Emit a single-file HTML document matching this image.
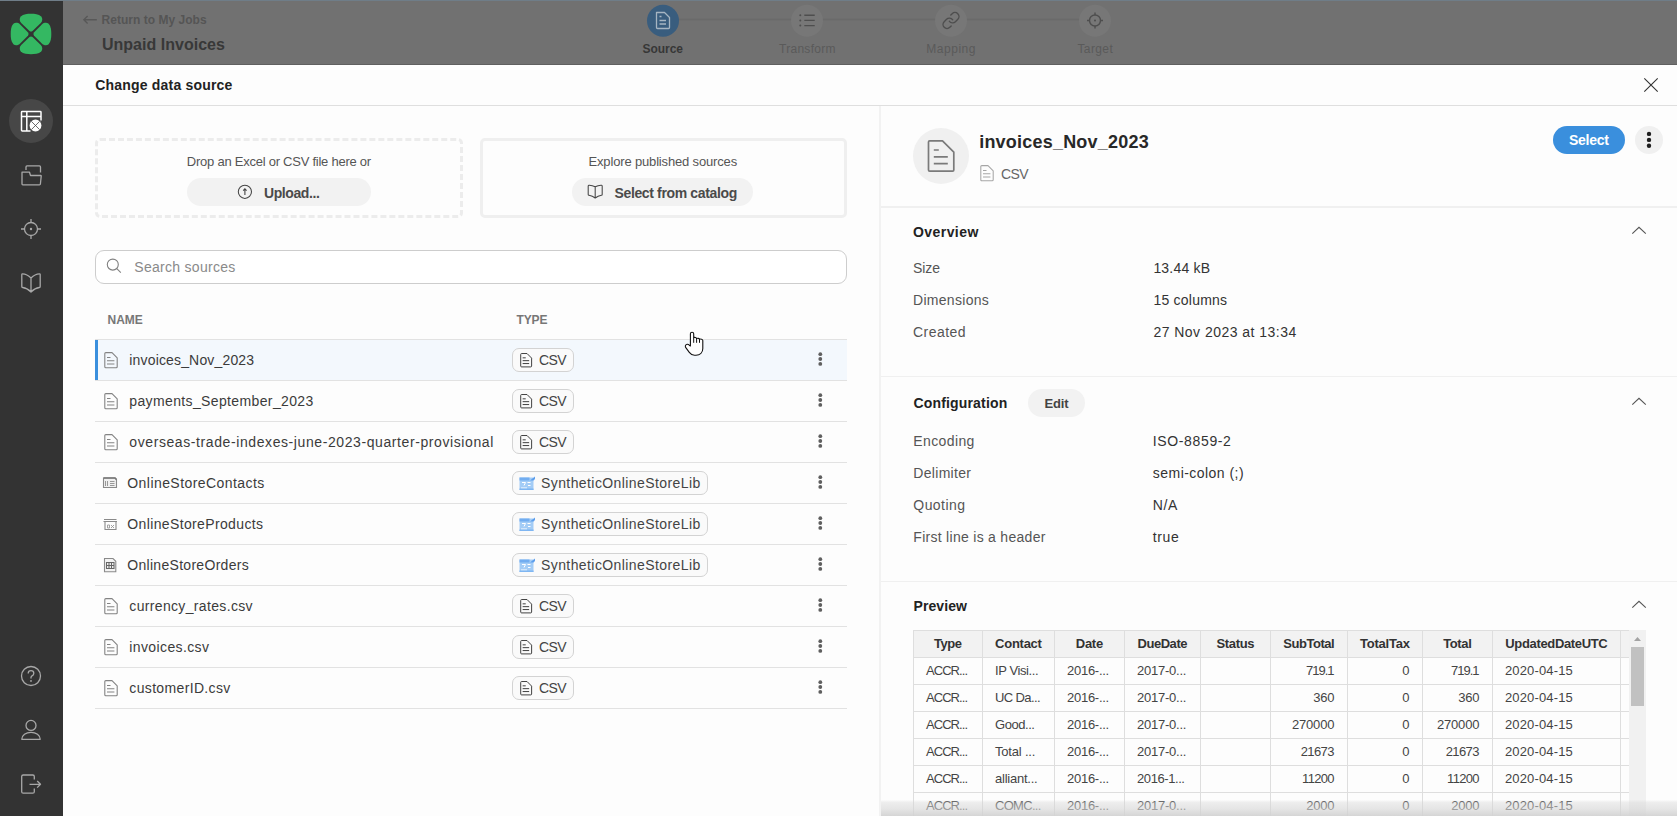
<!DOCTYPE html>
<html><head><meta charset="utf-8">
<style>
*{box-sizing:border-box;margin:0;padding:0}
html,body{width:1677px;height:816px;overflow:hidden;background:#fff}
body{position:relative;font-family:"Liberation Sans",sans-serif;color:#333}
.a{position:absolute;white-space:nowrap}
svg{position:absolute;overflow:visible}
</style></head><body>
<div class="a" style="left:63px;top:0;width:1614px;height:65px;background:#717171"></div>
<div class="a" style="left:63px;top:64px;width:1614px;height:1px;background:#606060"></div>
<div class="a" style="left:63px;top:65px;width:1614px;height:751px;background:#fdfdfd"></div>
<svg style="left:0;top:0" width="1677" height="65">
<line x1="663" y1="19.5" x2="1095" y2="19.5" stroke="#6a6a6a" stroke-width="1.5"/>
<circle cx="663" cy="20.8" r="16" fill="#395d7e"/>
<circle cx="807" cy="20.8" r="16" fill="#777777"/>
<circle cx="951" cy="20.8" r="16" fill="#777777"/>
<circle cx="1095" cy="20.8" r="16" fill="#777777"/>
<g fill="none" stroke="#a6b5c2" stroke-width="1.3" stroke-linejoin="round">
<path d="M656.5,12.5 H664.5 L669.5,17.5 V27.5 Q669.5,28.5 668.5,28.5 H657.5 Q656.5,28.5 656.5,27.5 Z"/>
<path d="M659.5,16.5 H661.5 M659.5,20.5 H666 M659.5,24 H666"/>
</g>
<g fill="none" stroke="#4e4e4e" stroke-width="1.4">
<path d="M804.3,15.3 H814.7 M804.3,20.4 H814.7 M804.3,25.6 H814.7"/>
<g transform="translate(941.4,10.9) scale(0.8)" stroke-width="1.75" stroke-linecap="round" stroke-linejoin="round"><path d="M10 13a5 5 0 0 0 7.54.54l3-3a5 5 0 0 0-7.07-7.07l-1.72 1.71"/><path d="M14 11a5 5 0 0 0-7.54-.54l-3 3a5 5 0 0 0 7.07 7.07l1.71-1.71"/></g>
<circle cx="1095" cy="20.5" r="5.5"/>
<path d="M1095,12.5 V15 M1095,26 V28.5 M1087,20.5 H1089.5 M1100.5,20.5 H1103"/>
</g>
<g fill="#4e4e4e"><circle cx="800.3" cy="15.3" r="1"/><circle cx="800.3" cy="20.4" r="1"/><circle cx="800.3" cy="25.6" r="1"/><circle cx="1095" cy="20.5" r="1"/></g>
<path d="M96.8,19.7 H83.8 M87.6,15.9 L83.8,19.7 L87.6,23.5" fill="none" stroke="#585858" stroke-width="1.35"/>
</svg>
<div class="a" style="left:63px;top:105px;width:1614px;height:1px;background:#dfdfdf;border-radius:0px;"></div>
<svg style="left:1643;top:77" width="16" height="16"><path d="M1.3,1.3 L14.7,14.7 M14.7,1.3 L1.3,14.7" stroke="#333" stroke-width="1.1"/></svg>
<div class="a" style="left:95px;top:138px;width:368px;height:80px;background:transparent;border-radius:5px;border:3px dashed #ececec;"></div>
<div class="a" style="left:187.3px;top:178.3px;width:183.7px;height:27.6px;background:#f2f2f2;border-radius:14px;"></div>
<svg style="left:232;top:180" width="26" height="26"><circle cx="12.9" cy="11.8" r="6.6" fill="none" stroke="#444" stroke-width="1.05"/><path d="M12.9,15 V8.9 M11.2,10.6 L12.9,8.9 L14.6,10.6" fill="none" stroke="#444" stroke-width="1.1"/></svg>
<div class="a" style="left:479.5px;top:138.3px;width:367.5px;height:79.5px;background:transparent;border-radius:5px;border:3px solid #efefef;"></div>
<div class="a" style="left:572.2px;top:178.4px;width:181.3px;height:27.5px;background:#f2f2f2;border-radius:14px;"></div>
<svg style="left:582;top:180" width="26" height="26"><path d="M13.2,6.8 Q10,5 6.8,5.2 Q6.2,5.3 6.2,6 V14.5 Q6.2,15.2 7,15.3 Q10.5,15.8 13.2,18 Q16,15.8 19.4,15.3 Q20.2,15.2 20.2,14.5 V6 Q20.2,5.3 19.6,5.2 Q16.4,5 13.2,6.8 V17.8" fill="none" stroke="#444" stroke-width="1.05" stroke-linejoin="round"/></svg>
<div class="a" style="left:95.4px;top:250.3px;width:751.6px;height:34px;background:#fff;border-radius:9px;border:1px solid #cdcdcd;"></div>
<svg style="left:100;top:254" width="26" height="26"><circle cx="12.8" cy="10.6" r="5.5" fill="none" stroke="#808080" stroke-width="1.1"/><path d="M16.8,14.6 L20.8,18.6" stroke="#808080" stroke-width="1.1"/></svg>
<div class="a" style="left:95px;top:339px;width:752px;height:1px;background:#e2e2e2;border-radius:0px;"></div>
<div class="a" style="left:95px;top:340px;width:752px;height:40px;background:#f3f8fd;border-radius:0px;"></div>
<div class="a" style="left:95px;top:340px;width:3px;height:40px;background:#3a8fdd;border-radius:0px;"></div>
<div class="a" style="left:95px;top:380px;width:752px;height:1px;background:#e2e2e2;border-radius:0px;"></div>
<svg style="left:103.6px;top:351.5px" width="16.00" height="18.00" viewBox="0 0 16 18"><path d="M0.8,1.6 Q0.8,0.6 1.8,0.6 H8 L13.2,5.8 V14.8 Q13.2,15.8 12.2,15.8 H1.8 Q0.8,15.8 0.8,14.8 Z" fill="none" stroke="#838383" stroke-width="1.1" stroke-linejoin="round"/><path d="M3,5.5 H6.5 M3,8.7 H10.4 M3,12 H10.4" stroke="#838383" stroke-width="1.1"/></svg>
<div class="a" style="left:512px;top:348px;width:61.5px;height:24px;background:#fafafa;border-radius:7px;border:1px solid #d3d3d3;"></div>
<svg style="left:520.1px;top:352.6px" width="14.08" height="15.84" viewBox="0 0 16 18"><path d="M0.8,1.6 Q0.8,0.6 1.8,0.6 H8 L13.2,5.8 V14.8 Q13.2,15.8 12.2,15.8 H1.8 Q0.8,15.8 0.8,14.8 Z" fill="none" stroke="#3a3a3a" stroke-width="1.1" stroke-linejoin="round"/><path d="M3,5.5 H6.5 M3,8.7 H10.4 M3,12 H10.4" stroke="#3a3a3a" stroke-width="1.1"/></svg>
<svg style="left:816px;top:350px" width="8" height="18"><circle cx="4.3" cy="4.2" r="1.9" fill="#5f5f5f"/><circle cx="4.3" cy="9" r="1.9" fill="#5f5f5f"/><circle cx="4.3" cy="13.9" r="1.9" fill="#5f5f5f"/></svg>
<div class="a" style="left:95px;top:421px;width:752px;height:1px;background:#e2e2e2;border-radius:0px;"></div>
<svg style="left:103.6px;top:392.5px" width="16.00" height="18.00" viewBox="0 0 16 18"><path d="M0.8,1.6 Q0.8,0.6 1.8,0.6 H8 L13.2,5.8 V14.8 Q13.2,15.8 12.2,15.8 H1.8 Q0.8,15.8 0.8,14.8 Z" fill="none" stroke="#838383" stroke-width="1.1" stroke-linejoin="round"/><path d="M3,5.5 H6.5 M3,8.7 H10.4 M3,12 H10.4" stroke="#838383" stroke-width="1.1"/></svg>
<div class="a" style="left:512px;top:389px;width:61.5px;height:24px;background:#fafafa;border-radius:7px;border:1px solid #d3d3d3;"></div>
<svg style="left:520.1px;top:393.6px" width="14.08" height="15.84" viewBox="0 0 16 18"><path d="M0.8,1.6 Q0.8,0.6 1.8,0.6 H8 L13.2,5.8 V14.8 Q13.2,15.8 12.2,15.8 H1.8 Q0.8,15.8 0.8,14.8 Z" fill="none" stroke="#3a3a3a" stroke-width="1.1" stroke-linejoin="round"/><path d="M3,5.5 H6.5 M3,8.7 H10.4 M3,12 H10.4" stroke="#3a3a3a" stroke-width="1.1"/></svg>
<svg style="left:816px;top:391px" width="8" height="18"><circle cx="4.3" cy="4.2" r="1.9" fill="#5f5f5f"/><circle cx="4.3" cy="9" r="1.9" fill="#5f5f5f"/><circle cx="4.3" cy="13.9" r="1.9" fill="#5f5f5f"/></svg>
<div class="a" style="left:95px;top:462px;width:752px;height:1px;background:#e2e2e2;border-radius:0px;"></div>
<svg style="left:103.6px;top:433.5px" width="16.00" height="18.00" viewBox="0 0 16 18"><path d="M0.8,1.6 Q0.8,0.6 1.8,0.6 H8 L13.2,5.8 V14.8 Q13.2,15.8 12.2,15.8 H1.8 Q0.8,15.8 0.8,14.8 Z" fill="none" stroke="#838383" stroke-width="1.1" stroke-linejoin="round"/><path d="M3,5.5 H6.5 M3,8.7 H10.4 M3,12 H10.4" stroke="#838383" stroke-width="1.1"/></svg>
<div class="a" style="left:512px;top:430px;width:61.5px;height:24px;background:#fafafa;border-radius:7px;border:1px solid #d3d3d3;"></div>
<svg style="left:520.1px;top:434.6px" width="14.08" height="15.84" viewBox="0 0 16 18"><path d="M0.8,1.6 Q0.8,0.6 1.8,0.6 H8 L13.2,5.8 V14.8 Q13.2,15.8 12.2,15.8 H1.8 Q0.8,15.8 0.8,14.8 Z" fill="none" stroke="#3a3a3a" stroke-width="1.1" stroke-linejoin="round"/><path d="M3,5.5 H6.5 M3,8.7 H10.4 M3,12 H10.4" stroke="#3a3a3a" stroke-width="1.1"/></svg>
<svg style="left:816px;top:432px" width="8" height="18"><circle cx="4.3" cy="4.2" r="1.9" fill="#5f5f5f"/><circle cx="4.3" cy="9" r="1.9" fill="#5f5f5f"/><circle cx="4.3" cy="13.9" r="1.9" fill="#5f5f5f"/></svg>
<div class="a" style="left:95px;top:503px;width:752px;height:1px;background:#e2e2e2;border-radius:0px;"></div>
<div class="a" style="left:512.3px;top:471px;width:195.3px;height:23.5px;background:#fafafa;border-radius:7px;border:1px solid #d3d3d3;"></div>
<svg style="left:518.5px;top:475.5px" width="17" height="15"><rect x="0.5" y="1.5" width="14" height="12.5" fill="#a3ccf6"/><rect x="0.5" y="1.5" width="10" height="3" fill="#72adf0"/><path d="M11,4.5 L16,0.5 V3 L14.5,4.5 Z" fill="#5d9eec"/><path d="M3,6.5 H6.5 L5,9.5 M8.5,6.5 H11.5 M9,9.5 H11.5 M2,12 H8" fill="none" stroke="#fff" stroke-width="1"/><rect x="0.5" y="12.5" width="14" height="1.5" fill="#7fb6f2"/></svg>
<svg style="left:102.5px;top:381.5px" width="16" height="12"></svg>
<svg style="left:816px;top:473px" width="8" height="18"><circle cx="4.3" cy="4.2" r="1.9" fill="#5f5f5f"/><circle cx="4.3" cy="9" r="1.9" fill="#5f5f5f"/><circle cx="4.3" cy="13.9" r="1.9" fill="#5f5f5f"/></svg>
<div class="a" style="left:95px;top:544px;width:752px;height:1px;background:#e2e2e2;border-radius:0px;"></div>
<div class="a" style="left:512.3px;top:512px;width:195.3px;height:23.5px;background:#fafafa;border-radius:7px;border:1px solid #d3d3d3;"></div>
<svg style="left:518.5px;top:516.5px" width="17" height="15"><rect x="0.5" y="1.5" width="14" height="12.5" fill="#a3ccf6"/><rect x="0.5" y="1.5" width="10" height="3" fill="#72adf0"/><path d="M11,4.5 L16,0.5 V3 L14.5,4.5 Z" fill="#5d9eec"/><path d="M3,6.5 H6.5 L5,9.5 M8.5,6.5 H11.5 M9,9.5 H11.5 M2,12 H8" fill="none" stroke="#fff" stroke-width="1"/><rect x="0.5" y="12.5" width="14" height="1.5" fill="#7fb6f2"/></svg>
<svg style="left:816px;top:514px" width="8" height="18"><circle cx="4.3" cy="4.2" r="1.9" fill="#5f5f5f"/><circle cx="4.3" cy="9" r="1.9" fill="#5f5f5f"/><circle cx="4.3" cy="13.9" r="1.9" fill="#5f5f5f"/></svg>
<div class="a" style="left:95px;top:585px;width:752px;height:1px;background:#e2e2e2;border-radius:0px;"></div>
<div class="a" style="left:512.3px;top:553px;width:195.3px;height:23.5px;background:#fafafa;border-radius:7px;border:1px solid #d3d3d3;"></div>
<svg style="left:518.5px;top:557.5px" width="17" height="15"><rect x="0.5" y="1.5" width="14" height="12.5" fill="#a3ccf6"/><rect x="0.5" y="1.5" width="10" height="3" fill="#72adf0"/><path d="M11,4.5 L16,0.5 V3 L14.5,4.5 Z" fill="#5d9eec"/><path d="M3,6.5 H6.5 L5,9.5 M8.5,6.5 H11.5 M9,9.5 H11.5 M2,12 H8" fill="none" stroke="#fff" stroke-width="1"/><rect x="0.5" y="12.5" width="14" height="1.5" fill="#7fb6f2"/></svg>
<svg style="left:816px;top:555px" width="8" height="18"><circle cx="4.3" cy="4.2" r="1.9" fill="#5f5f5f"/><circle cx="4.3" cy="9" r="1.9" fill="#5f5f5f"/><circle cx="4.3" cy="13.9" r="1.9" fill="#5f5f5f"/></svg>
<div class="a" style="left:95px;top:626px;width:752px;height:1px;background:#e2e2e2;border-radius:0px;"></div>
<svg style="left:103.6px;top:597.5px" width="16.00" height="18.00" viewBox="0 0 16 18"><path d="M0.8,1.6 Q0.8,0.6 1.8,0.6 H8 L13.2,5.8 V14.8 Q13.2,15.8 12.2,15.8 H1.8 Q0.8,15.8 0.8,14.8 Z" fill="none" stroke="#838383" stroke-width="1.1" stroke-linejoin="round"/><path d="M3,5.5 H6.5 M3,8.7 H10.4 M3,12 H10.4" stroke="#838383" stroke-width="1.1"/></svg>
<div class="a" style="left:512px;top:594px;width:61.5px;height:24px;background:#fafafa;border-radius:7px;border:1px solid #d3d3d3;"></div>
<svg style="left:520.1px;top:598.6px" width="14.08" height="15.84" viewBox="0 0 16 18"><path d="M0.8,1.6 Q0.8,0.6 1.8,0.6 H8 L13.2,5.8 V14.8 Q13.2,15.8 12.2,15.8 H1.8 Q0.8,15.8 0.8,14.8 Z" fill="none" stroke="#3a3a3a" stroke-width="1.1" stroke-linejoin="round"/><path d="M3,5.5 H6.5 M3,8.7 H10.4 M3,12 H10.4" stroke="#3a3a3a" stroke-width="1.1"/></svg>
<svg style="left:816px;top:596px" width="8" height="18"><circle cx="4.3" cy="4.2" r="1.9" fill="#5f5f5f"/><circle cx="4.3" cy="9" r="1.9" fill="#5f5f5f"/><circle cx="4.3" cy="13.9" r="1.9" fill="#5f5f5f"/></svg>
<div class="a" style="left:95px;top:667px;width:752px;height:1px;background:#e2e2e2;border-radius:0px;"></div>
<svg style="left:103.6px;top:638.5px" width="16.00" height="18.00" viewBox="0 0 16 18"><path d="M0.8,1.6 Q0.8,0.6 1.8,0.6 H8 L13.2,5.8 V14.8 Q13.2,15.8 12.2,15.8 H1.8 Q0.8,15.8 0.8,14.8 Z" fill="none" stroke="#838383" stroke-width="1.1" stroke-linejoin="round"/><path d="M3,5.5 H6.5 M3,8.7 H10.4 M3,12 H10.4" stroke="#838383" stroke-width="1.1"/></svg>
<div class="a" style="left:512px;top:635px;width:61.5px;height:24px;background:#fafafa;border-radius:7px;border:1px solid #d3d3d3;"></div>
<svg style="left:520.1px;top:639.6px" width="14.08" height="15.84" viewBox="0 0 16 18"><path d="M0.8,1.6 Q0.8,0.6 1.8,0.6 H8 L13.2,5.8 V14.8 Q13.2,15.8 12.2,15.8 H1.8 Q0.8,15.8 0.8,14.8 Z" fill="none" stroke="#3a3a3a" stroke-width="1.1" stroke-linejoin="round"/><path d="M3,5.5 H6.5 M3,8.7 H10.4 M3,12 H10.4" stroke="#3a3a3a" stroke-width="1.1"/></svg>
<svg style="left:816px;top:637px" width="8" height="18"><circle cx="4.3" cy="4.2" r="1.9" fill="#5f5f5f"/><circle cx="4.3" cy="9" r="1.9" fill="#5f5f5f"/><circle cx="4.3" cy="13.9" r="1.9" fill="#5f5f5f"/></svg>
<div class="a" style="left:95px;top:708px;width:752px;height:1px;background:#e2e2e2;border-radius:0px;"></div>
<svg style="left:103.6px;top:679.5px" width="16.00" height="18.00" viewBox="0 0 16 18"><path d="M0.8,1.6 Q0.8,0.6 1.8,0.6 H8 L13.2,5.8 V14.8 Q13.2,15.8 12.2,15.8 H1.8 Q0.8,15.8 0.8,14.8 Z" fill="none" stroke="#838383" stroke-width="1.1" stroke-linejoin="round"/><path d="M3,5.5 H6.5 M3,8.7 H10.4 M3,12 H10.4" stroke="#838383" stroke-width="1.1"/></svg>
<div class="a" style="left:512px;top:676px;width:61.5px;height:24px;background:#fafafa;border-radius:7px;border:1px solid #d3d3d3;"></div>
<svg style="left:520.1px;top:680.6px" width="14.08" height="15.84" viewBox="0 0 16 18"><path d="M0.8,1.6 Q0.8,0.6 1.8,0.6 H8 L13.2,5.8 V14.8 Q13.2,15.8 12.2,15.8 H1.8 Q0.8,15.8 0.8,14.8 Z" fill="none" stroke="#3a3a3a" stroke-width="1.1" stroke-linejoin="round"/><path d="M3,5.5 H6.5 M3,8.7 H10.4 M3,12 H10.4" stroke="#3a3a3a" stroke-width="1.1"/></svg>
<svg style="left:816px;top:678px" width="8" height="18"><circle cx="4.3" cy="4.2" r="1.9" fill="#5f5f5f"/><circle cx="4.3" cy="9" r="1.9" fill="#5f5f5f"/><circle cx="4.3" cy="13.9" r="1.9" fill="#5f5f5f"/></svg>
<svg style="left:100px;top:470px" width="22" height="110">
<g fill="none" stroke="#8a8a8a" stroke-width="1.1">
<path d="M3.5,17.5 V8 H15 L16.5,9.5 V17.5 Z" fill="#f0f0f0"/><path d="M3.5,8 H15 L16.5,9.5" stroke="#777" stroke-width="1.6"/>
<path d="M5.5,11 V16 M7.5,11 V16 M10,11.5 H14.5 M10,13.5 H14.5 M10,15.5 H14.5" stroke="#999" stroke-width="1"/>
<path d="M4,49.5 H16.5 M3.5,51.5 H17 M5,52 V59.5 H16 V52" />
<path d="M7.5,55 H9.5 V58 H7.5 Z M11,55 L14,58 M14,55 L11,58" stroke="#999" stroke-width="0.9"/>
<path d="M4.5,88.5 H13 L15.8,91.3 V101.8 H4.5 Z" fill="#f3f3f3"/>
<path d="M6.5,92.5 H14 V98.5 H6.5 Z M6.5,95.5 H14 M9,92.5 V98.5 M11.5,92.5 V98.5" stroke="#666" stroke-width="1.1"/>
</g></svg>
<div class="a" style="left:879px;top:106px;width:2px;height:710px;background:#f2f2f2;border-radius:0px;"></div>
<svg style="left:680px;top:328px" width="30" height="30"><path d="M10.4,18 L10.4,5.8 C10.4,3.8 13.7,3.8 13.7,5.8 L13.7,9.6 C14.5,9.2 16.4,9.3 16.6,10.6 C17.4,10 19.4,10.3 19.5,11.4 C20.4,10.8 22.8,11 22.8,12.6 L22.8,20.5 C22.8,24.5 20,27.2 16,27.2 L14.5,27.2 C12,27.2 10.5,26 9.3,24.4 L5.8,19.6 C5,18.5 5.3,17 6.5,16.5 C7.6,16 8.6,16.5 9.3,17.2 Z" fill="#fff" stroke="#111" stroke-width="1.1" stroke-linejoin="round"/><path d="M13.7,9.6 V14.8 M16.6,10.6 V14.8 M19.5,11.4 V14.8" stroke="#111" stroke-width="1"/></svg>
<svg style="left:913px;top:128px" width="56" height="56"><circle cx="28" cy="28" r="28" fill="#f0f0f0"/><path d="M15.5,14 Q15.5,12.8 16.7,12.8 H29.5 L40.8,24.1 V42 Q40.8,43.2 39.6,43.2 H16.7 Q15.5,43.2 15.5,42 Z" fill="none" stroke="#7a7a7a" stroke-width="1.7" stroke-linejoin="round"/><path d="M20.8,22 H25.8 M20.8,28.8 H34.8 M20.8,35.6 H34.8" stroke="#7a7a7a" stroke-width="1.7"/></svg>
<svg style="left:980.3px;top:165.3px" width="16.00" height="18.00" viewBox="0 0 16 18"><path d="M0.8,1.6 Q0.8,0.6 1.8,0.6 H8 L13.2,5.8 V14.8 Q13.2,15.8 12.2,15.8 H1.8 Q0.8,15.8 0.8,14.8 Z" fill="none" stroke="#a6a6a6" stroke-width="1.05" stroke-linejoin="round"/><path d="M3,5.5 H6.5 M3,8.7 H10.4 M3,12 H10.4" stroke="#a6a6a6" stroke-width="1.05"/></svg>
<div class="a" style="left:1553px;top:126px;width:72px;height:28px;background:#3a8fdd;border-radius:14px;"></div>
<svg style="left:1635px;top:126px" width="28" height="28"><circle cx="14" cy="14" r="14" fill="#f0f0f0"/><circle cx="14" cy="7.9" r="2.2" fill="#1e1e1e"/><circle cx="14" cy="13.9" r="2.2" fill="#1e1e1e"/><circle cx="14" cy="19.8" r="2.2" fill="#1e1e1e"/></svg>
<div class="a" style="left:881px;top:206px;width:796px;height:2px;background:#f0f0f0;border-radius:0px;"></div>
<svg style="left:1630px;top:225px" width="18" height="12"><path d="M2.3,8.7 L9,2.3 L15.8,8.7" fill="none" stroke="#555" stroke-width="1.1"/></svg>
<div class="a" style="left:881px;top:376px;width:796px;height:1px;background:#f0f0f0;border-radius:0px;"></div>
<div class="a" style="left:1028px;top:389px;width:57px;height:28px;background:#f2f2f2;border-radius:14px;"></div>
<svg style="left:1630px;top:396px" width="18" height="12"><path d="M2.3,8.7 L9,2.3 L15.8,8.7" fill="none" stroke="#555" stroke-width="1.1"/></svg>
<div class="a" style="left:881px;top:581px;width:796px;height:1px;background:#f0f0f0;border-radius:0px;"></div>
<svg style="left:1630px;top:599px" width="18" height="12"><path d="M2.3,8.7 L9,2.3 L15.8,8.7" fill="none" stroke="#555" stroke-width="1.1"/></svg>
<div class="a" style="left:913px;top:630px;width:716px;height:27px;background:#f2f2f2;border-radius:0px;"></div>
<div class="a" style="left:913px;top:630px;width:716px;height:1px;background:#dedede;border-radius:0px;"></div>
<div class="a" style="left:913px;top:657px;width:716px;height:1px;background:#dedede;border-radius:0px;"></div>
<div class="a" style="left:913px;top:684px;width:716px;height:1px;background:#dedede;border-radius:0px;"></div>
<div class="a" style="left:913px;top:711px;width:716px;height:1px;background:#dedede;border-radius:0px;"></div>
<div class="a" style="left:913px;top:738px;width:716px;height:1px;background:#dedede;border-radius:0px;"></div>
<div class="a" style="left:913px;top:765px;width:716px;height:1px;background:#dedede;border-radius:0px;"></div>
<div class="a" style="left:913px;top:792px;width:716px;height:1px;background:#dedede;border-radius:0px;"></div>
<div class="a" style="left:913px;top:819px;width:716px;height:1px;background:#dedede;border-radius:0px;"></div>
<div class="a" style="left:913px;top:630px;width:1px;height:186px;background:#dedede;border-radius:0px;"></div>
<div class="a" style="left:982px;top:630px;width:1px;height:186px;background:#dedede;border-radius:0px;"></div>
<div class="a" style="left:1054px;top:630px;width:1px;height:186px;background:#dedede;border-radius:0px;"></div>
<div class="a" style="left:1124px;top:630px;width:1px;height:186px;background:#dedede;border-radius:0px;"></div>
<div class="a" style="left:1200px;top:630px;width:1px;height:186px;background:#dedede;border-radius:0px;"></div>
<div class="a" style="left:1270px;top:630px;width:1px;height:186px;background:#dedede;border-radius:0px;"></div>
<div class="a" style="left:1347px;top:630px;width:1px;height:186px;background:#dedede;border-radius:0px;"></div>
<div class="a" style="left:1422px;top:630px;width:1px;height:186px;background:#dedede;border-radius:0px;"></div>
<div class="a" style="left:1492px;top:630px;width:1px;height:186px;background:#dedede;border-radius:0px;"></div>
<div class="a" style="left:1620px;top:630px;width:1px;height:186px;background:#dedede;border-radius:0px;"></div>
<div class="a" style="left:1629px;top:630px;width:17px;height:186px;background:#f1f1f1;border-radius:0px;"></div>
<div class="a" style="left:1631px;top:647px;width:13px;height:59px;background:#c1c1c1;border-radius:0px;"></div>
<svg style="left:1629px;top:630px" width="17" height="17"><path d="M5,11 L8.5,7 L12,11 Z" fill="#a3a3a3"/></svg>
<div class="a t" id="t0" style="left:101.60px;top:13.84px;font-size:12px;line-height:12px;font-weight:700;color:#555;letter-spacing:0.021px">Return to My Jobs</div>
<div class="a t" id="t1" style="left:101.90px;top:36.76px;font-size:16px;line-height:16px;font-weight:700;color:#383838;letter-spacing:0.021px">Unpaid Invoices</div>
<div class="a t" id="t2" style="left:662.73px;transform:translateX(-50%);top:43.24px;font-size:12px;line-height:12px;font-weight:700;color:#373737;letter-spacing:-0.037px">Source</div>
<div class="a t" id="t3" style="left:807.39px;transform:translateX(-50%);top:42.84px;font-size:12px;line-height:12px;font-weight:400;color:#5a5a5a;letter-spacing:0.283px">Transform</div>
<div class="a t" id="t4" style="left:951.16px;transform:translateX(-50%);top:42.84px;font-size:12px;line-height:12px;font-weight:400;color:#5a5a5a;letter-spacing:0.528px">Mapping</div>
<div class="a t" id="t5" style="left:1095.30px;transform:translateX(-50%);top:42.84px;font-size:12px;line-height:12px;font-weight:400;color:#5a5a5a;letter-spacing:0.408px">Target</div>
<div class="a t" id="t6" style="left:95.30px;top:78.35px;font-size:14px;line-height:14px;font-weight:700;color:#222;letter-spacing:0.187px">Change data source</div>
<div class="a t" id="t7" style="left:278.88px;transform:translateX(-50%);top:155.40px;font-size:13px;line-height:13px;font-weight:400;color:#555;letter-spacing:-0.247px">Drop an Excel or CSV file here or</div>
<div class="a t" id="t8" style="left:264.00px;top:185.55px;font-size:14px;line-height:14px;font-weight:700;color:#4a4a4a;letter-spacing:-0.416px">Upload...</div>
<div class="a t" id="t9" style="left:662.77px;transform:translateX(-50%);top:155.30px;font-size:13px;line-height:13px;font-weight:400;color:#555;letter-spacing:-0.158px">Explore published sources</div>
<div class="a t" id="t10" style="left:614.50px;top:185.55px;font-size:14px;line-height:14px;font-weight:700;color:#4a4a4a;letter-spacing:-0.359px">Select from catalog</div>
<div class="a t" id="t11" style="left:134.30px;top:260.35px;font-size:14px;line-height:14px;font-weight:400;color:#8a8a8a;letter-spacing:0.286px">Search sources</div>
<div class="a t" id="t12" style="left:107.50px;top:314.14px;font-size:12px;line-height:12px;font-weight:700;color:#777;letter-spacing:0.000px">NAME</div>
<div class="a t" id="t13" style="left:516.50px;top:314.14px;font-size:12px;line-height:12px;font-weight:700;color:#777;letter-spacing:-0.115px">TYPE</div>
<div class="a t" id="t14" style="left:129.30px;top:353.15px;font-size:14px;line-height:14px;font-weight:400;color:#3b3b3b;letter-spacing:0.162px">invoices_Nov_2023</div>
<div class="a t" id="t15" style="left:539.00px;top:353.15px;font-size:14px;line-height:14px;font-weight:400;color:#444;letter-spacing:-0.598px">CSV</div>
<div class="a t" id="t16" style="left:129.30px;top:394.15px;font-size:14px;line-height:14px;font-weight:400;color:#3b3b3b;letter-spacing:0.368px">payments_September_2023</div>
<div class="a t" id="t17" style="left:539.00px;top:394.15px;font-size:14px;line-height:14px;font-weight:400;color:#444;letter-spacing:-0.598px">CSV</div>
<div class="a t" id="t18" style="left:129.30px;top:435.15px;font-size:14px;line-height:14px;font-weight:400;color:#3b3b3b;letter-spacing:0.591px">overseas-trade-indexes-june-2023-quarter-provisional</div>
<div class="a t" id="t19" style="left:539.00px;top:435.15px;font-size:14px;line-height:14px;font-weight:400;color:#444;letter-spacing:-0.598px">CSV</div>
<div class="a t" id="t20" style="left:127.30px;top:476.15px;font-size:14px;line-height:14px;font-weight:400;color:#3b3b3b;letter-spacing:0.434px">OnlineStoreContacts</div>
<div class="a t" id="t21" style="left:541.00px;top:476.15px;font-size:14px;line-height:14px;font-weight:400;color:#444;letter-spacing:0.413px">SyntheticOnlineStoreLib</div>
<div class="a t" id="t22" style="left:127.30px;top:517.15px;font-size:14px;line-height:14px;font-weight:400;color:#3b3b3b;letter-spacing:0.362px">OnlineStoreProducts</div>
<div class="a t" id="t23" style="left:541.00px;top:517.15px;font-size:14px;line-height:14px;font-weight:400;color:#444;letter-spacing:0.413px">SyntheticOnlineStoreLib</div>
<div class="a t" id="t24" style="left:127.30px;top:558.15px;font-size:14px;line-height:14px;font-weight:400;color:#3b3b3b;letter-spacing:0.293px">OnlineStoreOrders</div>
<div class="a t" id="t25" style="left:541.00px;top:558.15px;font-size:14px;line-height:14px;font-weight:400;color:#444;letter-spacing:0.413px">SyntheticOnlineStoreLib</div>
<div class="a t" id="t26" style="left:129.30px;top:599.15px;font-size:14px;line-height:14px;font-weight:400;color:#3b3b3b;letter-spacing:0.342px">currency_rates.csv</div>
<div class="a t" id="t27" style="left:539.00px;top:599.15px;font-size:14px;line-height:14px;font-weight:400;color:#444;letter-spacing:-0.598px">CSV</div>
<div class="a t" id="t28" style="left:129.30px;top:640.15px;font-size:14px;line-height:14px;font-weight:400;color:#3b3b3b;letter-spacing:0.385px">invoices.csv</div>
<div class="a t" id="t29" style="left:539.00px;top:640.15px;font-size:14px;line-height:14px;font-weight:400;color:#444;letter-spacing:-0.598px">CSV</div>
<div class="a t" id="t30" style="left:129.30px;top:681.15px;font-size:14px;line-height:14px;font-weight:400;color:#3b3b3b;letter-spacing:0.349px">customerID.csv</div>
<div class="a t" id="t31" style="left:539.00px;top:681.15px;font-size:14px;line-height:14px;font-weight:400;color:#444;letter-spacing:-0.598px">CSV</div>
<div class="a t" id="t32" style="left:979.20px;top:132.56px;font-size:18px;line-height:18px;font-weight:700;color:#282828;letter-spacing:0.212px">invoices_Nov_2023</div>
<div class="a t" id="t33" style="left:1001.00px;top:167.05px;font-size:14px;line-height:14px;font-weight:400;color:#666;letter-spacing:-0.598px">CSV</div>
<div class="a t" id="t34" style="left:1588.88px;transform:translateX(-50%);top:133.15px;font-size:14px;line-height:14px;font-weight:700;color:#fff;letter-spacing:-0.250px">Select</div>
<div class="a t" id="t35" style="left:913.00px;top:225.15px;font-size:14px;line-height:14px;font-weight:700;color:#222;letter-spacing:0.433px">Overview</div>
<div class="a t" id="t36" style="left:913.00px;top:261.15px;font-size:14px;line-height:14px;font-weight:400;color:#555;letter-spacing:-0.078px">Size</div>
<div class="a t" id="t37" style="left:1153.40px;top:261.15px;font-size:14px;line-height:14px;font-weight:400;color:#333;letter-spacing:0.191px">13.44 kB</div>
<div class="a t" id="t38" style="left:913.00px;top:293.15px;font-size:14px;line-height:14px;font-weight:400;color:#555;letter-spacing:0.295px">Dimensions</div>
<div class="a t" id="t39" style="left:1153.40px;top:293.15px;font-size:14px;line-height:14px;font-weight:400;color:#333;letter-spacing:0.234px">15 columns</div>
<div class="a t" id="t40" style="left:913.00px;top:325.15px;font-size:14px;line-height:14px;font-weight:400;color:#555;letter-spacing:0.448px">Created</div>
<div class="a t" id="t41" style="left:1153.40px;top:325.15px;font-size:14px;line-height:14px;font-weight:400;color:#333;letter-spacing:0.469px">27 Nov 2023 at 13:34</div>
<div class="a t" id="t42" style="left:913.50px;top:395.95px;font-size:14px;line-height:14px;font-weight:700;color:#222;letter-spacing:0.161px">Configuration</div>
<div class="a t" id="t43" style="left:1056.41px;transform:translateX(-50%);top:396.80px;font-size:13px;line-height:13px;font-weight:700;color:#444;letter-spacing:-0.188px">Edit</div>
<div class="a t" id="t44" style="left:913.30px;top:433.95px;font-size:14px;line-height:14px;font-weight:400;color:#555;letter-spacing:0.387px">Encoding</div>
<div class="a t" id="t45" style="left:1152.80px;top:433.95px;font-size:14px;line-height:14px;font-weight:400;color:#333;letter-spacing:0.636px">ISO-8859-2</div>
<div class="a t" id="t46" style="left:913.30px;top:465.95px;font-size:14px;line-height:14px;font-weight:400;color:#555;letter-spacing:0.308px">Delimiter</div>
<div class="a t" id="t47" style="left:1152.80px;top:465.95px;font-size:14px;line-height:14px;font-weight:400;color:#333;letter-spacing:0.462px">semi-colon (;)</div>
<div class="a t" id="t48" style="left:913.30px;top:497.95px;font-size:14px;line-height:14px;font-weight:400;color:#555;letter-spacing:0.442px">Quoting</div>
<div class="a t" id="t49" style="left:1152.80px;top:497.95px;font-size:14px;line-height:14px;font-weight:400;color:#333;letter-spacing:0.628px">N/A</div>
<div class="a t" id="t50" style="left:913.30px;top:529.95px;font-size:14px;line-height:14px;font-weight:400;color:#555;letter-spacing:0.287px">First line is a header</div>
<div class="a t" id="t51" style="left:1152.80px;top:529.95px;font-size:14px;line-height:14px;font-weight:400;color:#333;letter-spacing:0.625px">true</div>
<div class="a t" id="t52" style="left:913.50px;top:599.15px;font-size:14px;line-height:14px;font-weight:700;color:#222;letter-spacing:0.094px">Preview</div>
<div class="a t" id="t53" style="left:947.77px;transform:translateX(-50%);top:637.00px;font-size:13px;line-height:13px;font-weight:700;color:#333;letter-spacing:-0.464px">Type</div>
<div class="a t" id="t54" style="left:1018.37px;transform:translateX(-50%);top:637.00px;font-size:13px;line-height:13px;font-weight:700;color:#333;letter-spacing:-0.265px">Contact</div>
<div class="a t" id="t55" style="left:1089.35px;transform:translateX(-50%);top:637.00px;font-size:13px;line-height:13px;font-weight:700;color:#333;letter-spacing:-0.296px">Date</div>
<div class="a t" id="t56" style="left:1162.27px;transform:translateX(-50%);top:637.00px;font-size:13px;line-height:13px;font-weight:700;color:#333;letter-spacing:-0.458px">DueDate</div>
<div class="a t" id="t57" style="left:1235.33px;transform:translateX(-50%);top:637.00px;font-size:13px;line-height:13px;font-weight:700;color:#333;letter-spacing:-0.347px">Status</div>
<div class="a t" id="t58" style="left:1308.78px;transform:translateX(-50%);top:637.00px;font-size:13px;line-height:13px;font-weight:700;color:#333;letter-spacing:-0.449px">SubTotal</div>
<div class="a t" id="t59" style="left:1384.88px;transform:translateX(-50%);top:637.00px;font-size:13px;line-height:13px;font-weight:700;color:#333;letter-spacing:-0.247px">TotalTax</div>
<div class="a t" id="t60" style="left:1457.30px;transform:translateX(-50%);top:637.00px;font-size:13px;line-height:13px;font-weight:700;color:#333;letter-spacing:-0.398px">Total</div>
<div class="a t" id="t61" style="left:1556.33px;transform:translateX(-50%);top:637.00px;font-size:13px;line-height:13px;font-weight:700;color:#333;letter-spacing:-0.347px">UpdatedDateUTC</div>
<div class="a t" id="t62" style="left:926.00px;top:664.20px;font-size:13px;line-height:13px;font-weight:400;color:#444;letter-spacing:-0.945px">ACCR...</div>
<div class="a t" id="t63" style="left:995.00px;top:664.20px;font-size:13px;line-height:13px;font-weight:400;color:#444;letter-spacing:-0.413px">IP Visi...</div>
<div class="a t" id="t64" style="left:1067.00px;top:664.20px;font-size:13px;line-height:13px;font-weight:400;color:#444;letter-spacing:-0.271px">2016-...</div>
<div class="a t" id="t65" style="left:1137.00px;top:664.20px;font-size:13px;line-height:13px;font-weight:400;color:#444;letter-spacing:-0.241px">2017-0...</div>
<div class="a t" id="t66" style="left:1333.49px;transform:translateX(-100%);top:664.20px;font-size:13px;line-height:13px;font-weight:400;color:#444;letter-spacing:-1.012px">719.1</div>
<div class="a t" id="t67" style="left:1409.50px;transform:translateX(-100%);top:664.20px;font-size:13px;line-height:13px;font-weight:400;color:#444;letter-spacing:0.000px">0</div>
<div class="a t" id="t68" style="left:1478.49px;transform:translateX(-100%);top:664.20px;font-size:13px;line-height:13px;font-weight:400;color:#444;letter-spacing:-1.012px">719.1</div>
<div class="a t" id="t69" style="left:1505.00px;top:664.20px;font-size:13px;line-height:13px;font-weight:400;color:#444;letter-spacing:0.144px">2020-04-15</div>
<div class="a t" id="t70" style="left:926.00px;top:691.20px;font-size:13px;line-height:13px;font-weight:400;color:#444;letter-spacing:-0.945px">ACCR...</div>
<div class="a t" id="t71" style="left:995.00px;top:691.20px;font-size:13px;line-height:13px;font-weight:400;color:#444;letter-spacing:-0.621px">UC Da...</div>
<div class="a t" id="t72" style="left:1067.00px;top:691.20px;font-size:13px;line-height:13px;font-weight:400;color:#444;letter-spacing:-0.271px">2016-...</div>
<div class="a t" id="t73" style="left:1137.00px;top:691.20px;font-size:13px;line-height:13px;font-weight:400;color:#444;letter-spacing:-0.241px">2017-0...</div>
<div class="a t" id="t74" style="left:1334.30px;transform:translateX(-100%);top:691.20px;font-size:13px;line-height:13px;font-weight:400;color:#444;letter-spacing:-0.202px">360</div>
<div class="a t" id="t75" style="left:1409.50px;transform:translateX(-100%);top:691.20px;font-size:13px;line-height:13px;font-weight:400;color:#444;letter-spacing:0.000px">0</div>
<div class="a t" id="t76" style="left:1479.30px;transform:translateX(-100%);top:691.20px;font-size:13px;line-height:13px;font-weight:400;color:#444;letter-spacing:-0.202px">360</div>
<div class="a t" id="t77" style="left:1505.00px;top:691.20px;font-size:13px;line-height:13px;font-weight:400;color:#444;letter-spacing:0.144px">2020-04-15</div>
<div class="a t" id="t78" style="left:926.00px;top:718.20px;font-size:13px;line-height:13px;font-weight:400;color:#444;letter-spacing:-0.945px">ACCR...</div>
<div class="a t" id="t79" style="left:995.00px;top:718.20px;font-size:13px;line-height:13px;font-weight:400;color:#444;letter-spacing:-0.457px">Good...</div>
<div class="a t" id="t80" style="left:1067.00px;top:718.20px;font-size:13px;line-height:13px;font-weight:400;color:#444;letter-spacing:-0.271px">2016-...</div>
<div class="a t" id="t81" style="left:1137.00px;top:718.20px;font-size:13px;line-height:13px;font-weight:400;color:#444;letter-spacing:-0.241px">2017-0...</div>
<div class="a t" id="t82" style="left:1334.34px;transform:translateX(-100%);top:718.20px;font-size:13px;line-height:13px;font-weight:400;color:#444;letter-spacing:-0.158px">270000</div>
<div class="a t" id="t83" style="left:1409.50px;transform:translateX(-100%);top:718.20px;font-size:13px;line-height:13px;font-weight:400;color:#444;letter-spacing:0.000px">0</div>
<div class="a t" id="t84" style="left:1479.34px;transform:translateX(-100%);top:718.20px;font-size:13px;line-height:13px;font-weight:400;color:#444;letter-spacing:-0.158px">270000</div>
<div class="a t" id="t85" style="left:1505.00px;top:718.20px;font-size:13px;line-height:13px;font-weight:400;color:#444;letter-spacing:0.144px">2020-04-15</div>
<div class="a t" id="t86" style="left:926.00px;top:745.20px;font-size:13px;line-height:13px;font-weight:400;color:#444;letter-spacing:-0.945px">ACCR...</div>
<div class="a t" id="t87" style="left:995.00px;top:745.20px;font-size:13px;line-height:13px;font-weight:400;color:#444;letter-spacing:-0.190px">Total ...</div>
<div class="a t" id="t88" style="left:1067.00px;top:745.20px;font-size:13px;line-height:13px;font-weight:400;color:#444;letter-spacing:-0.271px">2016-...</div>
<div class="a t" id="t89" style="left:1137.00px;top:745.20px;font-size:13px;line-height:13px;font-weight:400;color:#444;letter-spacing:-0.241px">2017-0...</div>
<div class="a t" id="t90" style="left:1333.91px;transform:translateX(-100%);top:745.20px;font-size:13px;line-height:13px;font-weight:400;color:#444;letter-spacing:-0.589px">21673</div>
<div class="a t" id="t91" style="left:1409.50px;transform:translateX(-100%);top:745.20px;font-size:13px;line-height:13px;font-weight:400;color:#444;letter-spacing:0.000px">0</div>
<div class="a t" id="t92" style="left:1478.91px;transform:translateX(-100%);top:745.20px;font-size:13px;line-height:13px;font-weight:400;color:#444;letter-spacing:-0.589px">21673</div>
<div class="a t" id="t93" style="left:1505.00px;top:745.20px;font-size:13px;line-height:13px;font-weight:400;color:#444;letter-spacing:0.144px">2020-04-15</div>
<div class="a t" id="t94" style="left:926.00px;top:772.20px;font-size:13px;line-height:13px;font-weight:400;color:#444;letter-spacing:-0.945px">ACCR...</div>
<div class="a t" id="t95" style="left:995.00px;top:772.20px;font-size:13px;line-height:13px;font-weight:400;color:#444;letter-spacing:-0.235px">alliant...</div>
<div class="a t" id="t96" style="left:1067.00px;top:772.20px;font-size:13px;line-height:13px;font-weight:400;color:#444;letter-spacing:-0.271px">2016-...</div>
<div class="a t" id="t97" style="left:1137.00px;top:772.20px;font-size:13px;line-height:13px;font-weight:400;color:#444;letter-spacing:-0.416px">2016-1...</div>
<div class="a t" id="t98" style="left:1333.80px;transform:translateX(-100%);top:772.20px;font-size:13px;line-height:13px;font-weight:400;color:#444;letter-spacing:-0.697px">11200</div>
<div class="a t" id="t99" style="left:1409.50px;transform:translateX(-100%);top:772.20px;font-size:13px;line-height:13px;font-weight:400;color:#444;letter-spacing:0.000px">0</div>
<div class="a t" id="t100" style="left:1478.80px;transform:translateX(-100%);top:772.20px;font-size:13px;line-height:13px;font-weight:400;color:#444;letter-spacing:-0.697px">11200</div>
<div class="a t" id="t101" style="left:1505.00px;top:772.20px;font-size:13px;line-height:13px;font-weight:400;color:#444;letter-spacing:0.144px">2020-04-15</div>
<div class="a t" id="t102" style="left:926.00px;top:799.20px;font-size:13px;line-height:13px;font-weight:400;color:#444;letter-spacing:-0.945px">ACCR...</div>
<div class="a t" id="t103" style="left:995.00px;top:799.20px;font-size:13px;line-height:13px;font-weight:400;color:#444;letter-spacing:-0.710px">COMC...</div>
<div class="a t" id="t104" style="left:1067.00px;top:799.20px;font-size:13px;line-height:13px;font-weight:400;color:#444;letter-spacing:-0.271px">2016-...</div>
<div class="a t" id="t105" style="left:1137.00px;top:799.20px;font-size:13px;line-height:13px;font-weight:400;color:#444;letter-spacing:-0.241px">2017-0...</div>
<div class="a t" id="t106" style="left:1334.26px;transform:translateX(-100%);top:799.20px;font-size:13px;line-height:13px;font-weight:400;color:#444;letter-spacing:-0.241px">2000</div>
<div class="a t" id="t107" style="left:1409.50px;transform:translateX(-100%);top:799.20px;font-size:13px;line-height:13px;font-weight:400;color:#444;letter-spacing:0.000px">0</div>
<div class="a t" id="t108" style="left:1479.26px;transform:translateX(-100%);top:799.20px;font-size:13px;line-height:13px;font-weight:400;color:#444;letter-spacing:-0.241px">2000</div>
<div class="a t" id="t109" style="left:1505.00px;top:799.20px;font-size:13px;line-height:13px;font-weight:400;color:#444;letter-spacing:0.144px">2020-04-15</div>
<div class="a" style="left:881px;top:800px;width:796px;height:16px;background:linear-gradient(rgba(214,214,214,0.05) 0%, rgba(214,214,214,0.4) 15%, rgba(213,213,213,0.6) 55%, rgba(210,210,210,0.92) 100%)"></div>
<div class="a" style="left:0;top:0;width:63px;height:816px;background:#333333"></div>
<svg style="left:0;top:0" width="63" height="816" viewBox="0 0 63 816">
  <g transform="translate(31,34)" fill="#34b862">
    <path d="M-1.5,-2.9 L-9.8,-11.1 C-11.6,-12.9 -11.8,-16 -10.2,-17.6 C-7.8,-20 -3.5,-20.3 0,-20.3 C3.5,-20.3 7.8,-20 10.2,-17.6 C11.8,-16 11.6,-12.9 9.8,-11.1 L1.5,-2.9 Q0,-1.9 -1.5,-2.9 Z"/>
    <path transform="rotate(90)" d="M-1.5,-2.9 L-9.8,-11.1 C-11.6,-12.9 -11.8,-16 -10.2,-17.6 C-7.8,-20 -3.5,-20.3 0,-20.3 C3.5,-20.3 7.8,-20 10.2,-17.6 C11.8,-16 11.6,-12.9 9.8,-11.1 L1.5,-2.9 Q0,-1.9 -1.5,-2.9 Z"/>
    <path transform="rotate(180)" d="M-1.5,-2.9 L-9.8,-11.1 C-11.6,-12.9 -11.8,-16 -10.2,-17.6 C-7.8,-20 -3.5,-20.3 0,-20.3 C3.5,-20.3 7.8,-20 10.2,-17.6 C11.8,-16 11.6,-12.9 9.8,-11.1 L1.5,-2.9 Q0,-1.9 -1.5,-2.9 Z"/>
    <path transform="rotate(270)" d="M-1.5,-2.9 L-9.8,-11.1 C-11.6,-12.9 -11.8,-16 -10.2,-17.6 C-7.8,-20 -3.5,-20.3 0,-20.3 C3.5,-20.3 7.8,-20 10.2,-17.6 C11.8,-16 11.6,-12.9 9.8,-11.1 L1.5,-2.9 Q0,-1.9 -1.5,-2.9 Z"/>
  </g>
  <circle cx="31" cy="121" r="22" fill="#474747"/>
  <g fill="none" stroke="#fff" stroke-width="1.5" stroke-linejoin="round">
    <path d="M30.5,131 H22.2 Q21.5,131 21.5,130.3 V112.2 Q21.5,111.5 22.2,111.5 H40.3 Q41,111.5 41,112.2 V120.5"/>
    <path d="M21.5,116.5 H41 M26.8,111.5 V131"/>
  </g>
  <g transform="translate(35.5,125.5)">
    <circle r="5.9" fill="#fff"/>
    <path d="M-4.2,-4.2 L4.2,4.2 M4.2,-4.2 L-4.2,4.2" stroke="#474747" stroke-width="0.8"/>
  </g>
  <g fill="none" stroke="#a8a8a8" stroke-width="1.3" stroke-linejoin="round">
    <path d="M26,170 V167 Q26,165.9 27,165.9 H39.5 Q40.5,165.9 40.5,167 V172.5"/>
    <path d="M22,172.2 H29.5 L30.5,175.5 H40.8 Q41.3,175.5 41.2,176.2 L40.4,184 Q40.3,184.8 39.5,184.8 H22.8 Q22,184.8 22,184 Z"/>
    <circle cx="31" cy="229" r="6.5"/>
    <path d="M31,219 V222.5 M31,235.5 V239 M21,229 H24.5 M37.5,229 H41"/>
    <path d="M31,278 Q27,274 22.5,273.8 Q21.8,273.8 21.8,274.6 V286.5 Q21.8,287.4 22.7,287.5 Q27,288 31,292 Q35,288 39.3,287.5 Q40.2,287.4 40.2,286.5 V274.6 Q40.2,273.8 39.5,273.8 Q35,274 31,278 V292"/>
    <circle cx="31" cy="676" r="9.5"/>
    <circle cx="31" cy="725.4" r="5"/>
    <path d="M21.8,739.3 A9.2,7 0 0 1 40.2,739.3 Z"/>
    <path d="M34.3,779.6 V776.5 Q34.3,775 32.8,775 H23.2 Q21.7,775 21.7,776.5 V791.7 Q21.7,793.2 23.2,793.2 H32.8 Q34.3,793.2 34.3,791.7 V788.6 M29.5,784.3 H40.3 M37.2,781 L40.5,784.3 L37.2,787.6"/>
  </g>
  <circle cx="31" cy="229" r="1.2" fill="#a8a8a8"/>
  <path d="M28.2,673.4 Q28.2,670.6 31,670.6 Q33.8,670.6 33.8,673.2 Q33.8,675 32,675.9 Q31,676.4 31,677.6 V678.4" fill="none" stroke="#a8a8a8" stroke-width="1.3"/><circle cx="31" cy="680.9" r="0.95" fill="#a8a8a8"/>
</svg>

<div class="a" style="left:0;top:0;width:1677px;height:1px;background:#6f7d88"></div>
</body></html>
